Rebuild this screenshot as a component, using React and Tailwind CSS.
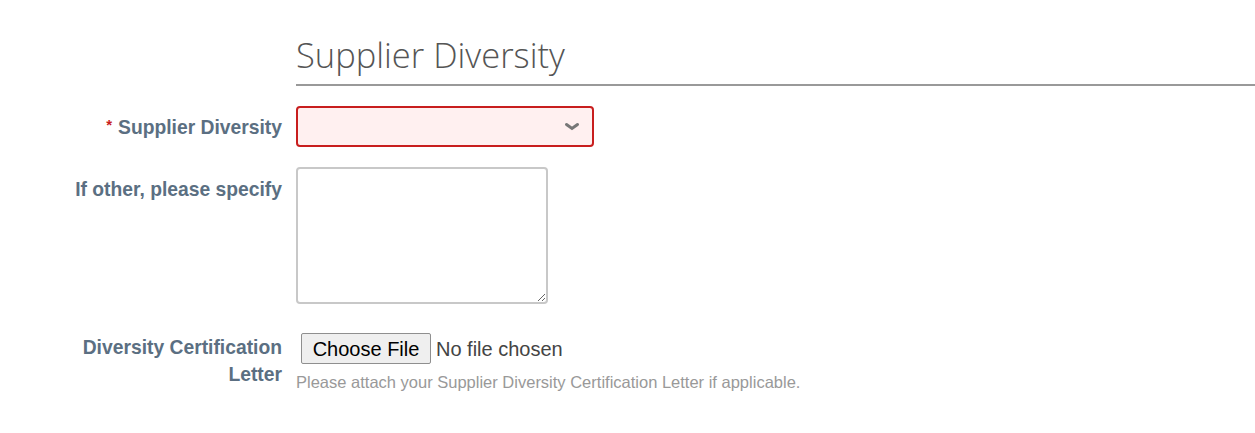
import React from "react";

const SupplierDiversity = () => {
  return (
    <div className="min-h-screen bg-white font-['Liberation_Sans',Arial,sans-serif]">
      <div className="pt-[33px] pl-[296px]">
        {/* header */}
        <h2 className="font-['Open_Sans',sans-serif] font-light text-[34.5px] leading-[44px] text-[#555] pb-[7px] border-b-2 border-[#999]">
          Supplier Diversity
        </h2>
      </div>

      {/* form */}
      <div className="flex flex-col mt-[20px]">
        <div className="flex items-center">
          <label className="w-[220px] ml-[62px] pt-[4px] text-right font-bold text-[19.3px] text-[#5b6f82]">
            <span className="text-[#c81e1e] text-[15px] align-top mr-[6px]">*</span>
            Supplier Diversity
          </label>
          <div className="ml-[14px] w-[298px] h-[41px] border-2 border-[#c81e1e] rounded-[4px] bg-[#fff0f0] flex items-center justify-end pr-[12px]">
            <svg width="16" height="10" viewBox="0 0 16 10">
              <path d="M2.5 2.5 L8 6.5 L13.5 2.5" fill="none" stroke="#777" strokeWidth="3" strokeLinecap="round" />
            </svg>
          </div>
        </div>

        <div className="flex mt-[20px]">
          <label className="w-[220px] ml-[62px] pt-[9px] text-right font-bold text-[19.3px] text-[#5b6f82]">
            If other, please specify
          </label>
          <textarea className="ml-[14px] w-[252px] h-[137px] border-2 border-[#c8c8c8] rounded-[4px] bg-white" />
        </div>

        <div className="flex mt-[29px]">
          <label className="w-[220px] ml-[62px] pt-[1px] text-right font-bold text-[19.3px] leading-[27px] text-[#5b6f82]">
            Diversity Certification Letter
          </label>
          <div className="ml-[14px] flex flex-col">
            <div className="flex items-center ml-[5px]">
              <button className="h-[31px] w-[130px] border border-[#8f8f8f] rounded-[2px] bg-[#efefef] text-[20px] text-black">
                Choose File
              </button>
              <span className="ml-[5px] text-[20px] text-[#444]">No file chosen</span>
            </div>
            <div className="mt-[6px] text-[16.5px] text-[#999]">
              Please attach your Supplier Diversity Certification Letter if applicable.
            </div>
          </div>
        </div>
      </div>
    </div>
  );
};

export default SupplierDiversity;
